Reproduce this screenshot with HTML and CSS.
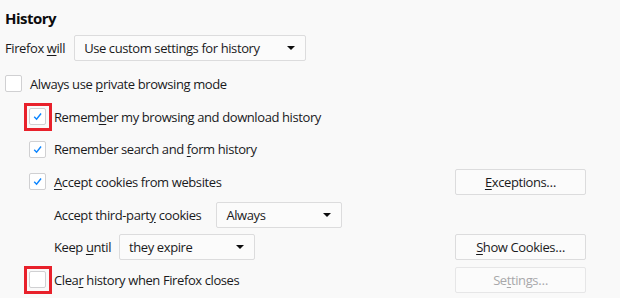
FILE: index.html
```html
<!DOCTYPE html>
<html>
<head>
<meta charset="utf-8">
<link rel="stylesheet" href="styles.css">
</head>
<body>
<div class="pane">
  <h2 class="title">History</h2>
  <div class="row first">
    <span class="label">Firefox <u>w</u>ill</span>
    <div class="select wide"><span>Use custom settings for history</span><span class="arrow"></span></div>
  </div>
  <div class="row">
    <div class="check-item">
      <span class="box"></span>
      <span class="label">Always use <u>p</u>rivate browsing mode</span>
    </div>
  </div>
  <div class="row indent">
    <div class="check-item">
      <span class="box checked marked"><svg viewBox="0 0 16 16"><path d="M4.5 8.3 L7 10.8 L11.8 4.8"/></svg></span>
      <span class="label">Remem<u>b</u>er my browsing and download history</span>
    </div>
  </div>
  <div class="row indent">
    <div class="check-item">
      <span class="box checked"><svg viewBox="0 0 16 16"><path d="M4.5 8.3 L7 10.8 L11.8 4.8"/></svg></span>
      <span class="label">Remember search and <u>f</u>orm history</span>
    </div>
  </div>
  <div class="row indent spread">
    <div class="check-item">
      <span class="box checked"><svg viewBox="0 0 16 16"><path d="M4.5 8.3 L7 10.8 L11.8 4.8"/></svg></span>
      <span class="label"><u>A</u>ccept cookies from websites</span>
    </div>
    <button class="btn"><u>E</u>xceptions…</button>
  </div>
  <div class="row sub third">
    <span class="label">Accept third-part<u>y</u> cookies</span>
    <div class="select mid"><span>Always</span><span class="arrow"></span></div>
  </div>
  <div class="row sub spread">
    <div class="inline">
      <span class="label">Keep <u>u</u>ntil</span>
      <div class="select short"><span>they expire</span><span class="arrow"></span></div>
    </div>
    <button class="btn"><u>S</u>how Cookies…</button>
  </div>
  <div class="row indent spread">
    <div class="check-item">
      <span class="box marked"></span>
      <span class="label">Clea<u>r</u> history when Firefox closes</span>
    </div>
    <button class="btn disabled">Se<u>t</u>tings…</button>
  </div>
</div>
</body>
</html>
```
FILE: styles.css
```css
html, body {
  margin: 0;
  padding: 0;
  background: #f9f9f9;
}
body {
  width: 620px;
  height: 298px;
  overflow: hidden;
  font-family: "Open Sans", "Noto Sans", sans-serif;
  font-size: 13px;
  letter-spacing: -0.4px;
  color: #1a1a1c;
}
.pane {
  padding: 0 34px 0 5px;
  display: flex;
  flex-direction: column;
}
.title {
  margin: 6px 0 0 0;
  font-size: 15px;
  font-weight: 700;
  line-height: 24px;
  letter-spacing: -0.5px;
  color: #0c0c0d;
}
.row {
  display: flex;
  align-items: center;
  height: 32.7px;
  gap: 9px;
  flex: none;
}
.row.first {
  height: 35px;
  margin-bottom: 2.5px;
}
.row.indent { padding-left: 24px; }
.row.sub { padding-left: 49px; gap: 8px; }
.row.sub.third { gap: 15px; }
.spread { justify-content: space-between; }
.inline { display: flex; align-items: center; gap: 8px; }
.check-item {
  display: flex;
  align-items: center;
  gap: 8px;
}
.label { white-space: nowrap; }
u { text-decoration-thickness: 1px; text-underline-offset: 2px; }
.box {
  position: relative;
  width: 15px;
  height: 15px;
  border: 1px solid #d0d0d2;
  border-radius: 2px;
  background: #fff;
  flex: none;
}
.box svg {
  position: absolute;
  left: 0; top: 0;
  width: 15px; height: 15px;
  fill: none;
  stroke: #0a84ff;
  stroke-width: 1.5;
}
.box.marked::after {
  content: "";
  position: absolute;
  left: -6px; top: -6px;
  width: 22px; height: 22px;
  border: 3px solid #e8212b;
}
.select {
  display: flex;
  align-items: center;
  justify-content: space-between;
  height: 24px;
  border: 1px solid #dcdcdd;
  border-radius: 2px;
  background: #fbfbfb;
  padding: 0 10px 0 9px;
  box-sizing: content-box;
}
.select.wide { width: 211px; }
.select.mid { width: 105px; }
.select.short { width: 115px; }
.arrow {
  width: 0; height: 0;
  border-left: 4px solid transparent;
  border-right: 4px solid transparent;
  border-top: 4px solid #0c0c0d;
}
.btn {
  width: 131px;
  height: 26px;
  border: 1px solid #dcdcdd;
  border-radius: 2px;
  background: #fbfbfb;
  font: inherit;
  letter-spacing: inherit;
  color: #1a1a1c;
  padding: 0;
}
.btn.disabled { color: #a8a8aa; border-color: #e6e6e7; }
```
